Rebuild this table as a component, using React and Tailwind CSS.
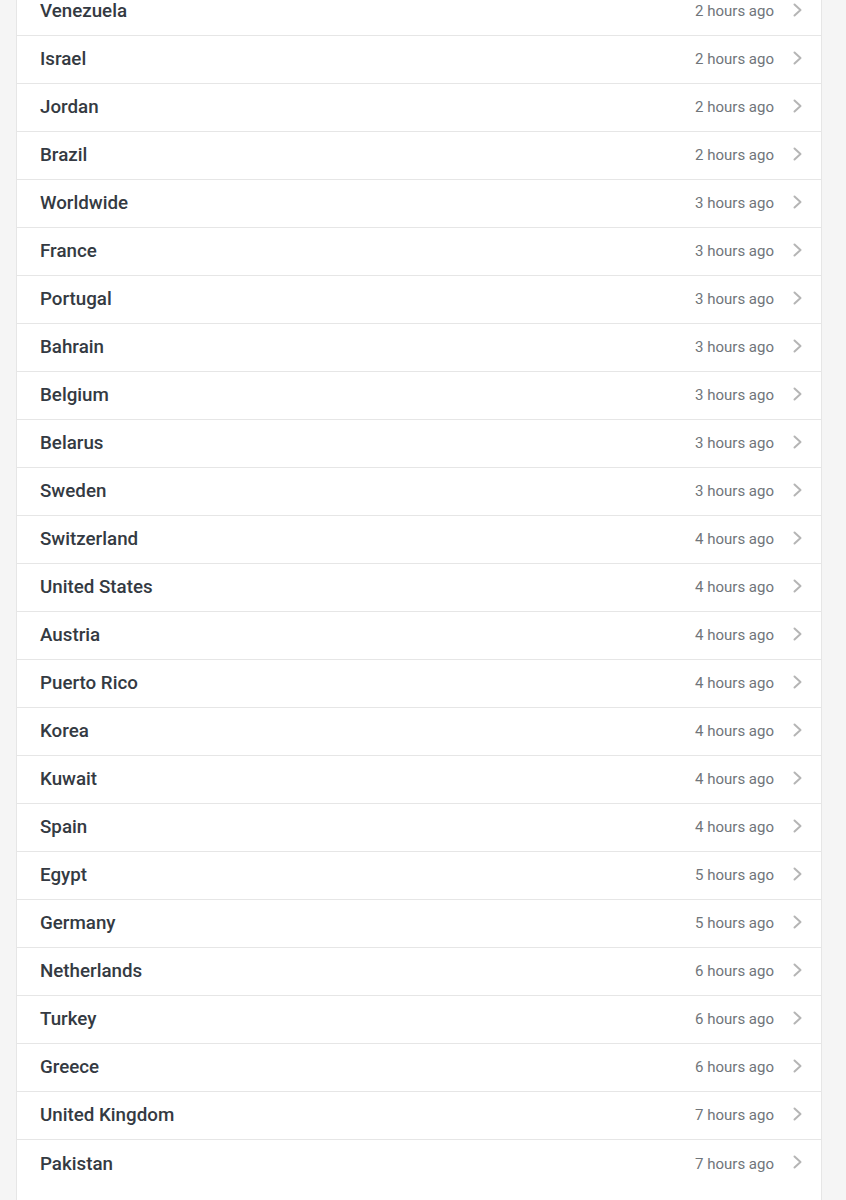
const rows = [
  ['Venezuela', 2], ['Israel', 2], ['Jordan', 2], ['Brazil', 2],
  ['Worldwide', 3], ['France', 3], ['Portugal', 3], ['Bahrain', 3],
  ['Belgium', 3], ['Belarus', 3], ['Sweden', 3], ['Switzerland', 4],
  ['United States', 4], ['Austria', 4], ['Puerto Rico', 4], ['Korea', 4],
  ['Kuwait', 4], ['Spain', 4], ['Egypt', 5], ['Germany', 5],
  ['Netherlands', 6], ['Turkey', 6], ['Greece', 6], ['United Kingdom', 7],
  ['Pakistan', 7],
];

function Chevron() {
  return (
    <svg width="12" height="14" viewBox="0 0 12 14" fill="none" className="text-[#b5b5b5]">
      <path d="M3.5 1.5 L9.5 7 L3.5 12.5" stroke="currentColor" strokeWidth="2" strokeLinecap="round" strokeLinejoin="round" />
    </svg>
  );
}

export default function App() {
  return (
    <div className="h-[1200px] overflow-hidden bg-[#f5f5f5] px-4 font-['Roboto',sans-serif]">
      <div className="-mt-[12px] mr-[8px] h-[1300px] border-x border-[#e6e6e6] bg-white">
        {rows.map(([name, h]) => (
          <div key={name} className="flex h-[48px] items-center border-b border-[#e6e6e6] pl-[23px] pr-[18px] last:border-b-0">
            <span className="flex-1 text-[18.75px] font-medium text-[#343a42]">{name}</span>
            <span className="text-[15px] text-[#70757a]">{h} hours ago</span>
            <span className="ml-[17px] -mt-[4px] flex">
              <Chevron />
            </span>
          </div>
        ))}
      </div>
    </div>
  );
}
